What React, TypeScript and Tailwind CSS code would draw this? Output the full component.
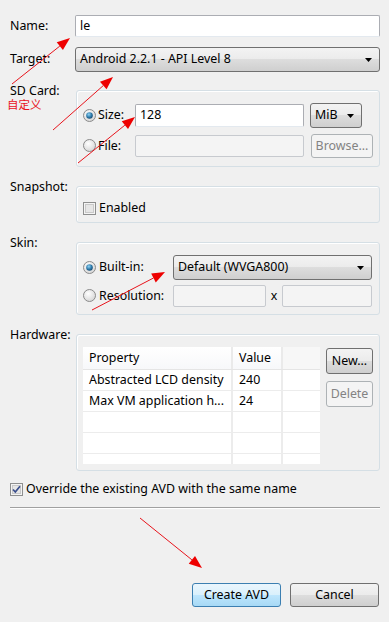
import React from "react";

const font = { fontFamily: '"Noto Sans", "Noto Sans CJK SC", sans-serif' };

const Radio = ({ checked }: { checked?: boolean }) => (
  <svg width="13" height="13" viewBox="0 0 13 13" className="shrink-0">
    <defs>
      <radialGradient id="rb" cx="0.4" cy="0.35" r="0.7">
        <stop offset="0" stopColor="#ffffff" />
        <stop offset="1" stopColor="#d4d4d4" />
      </radialGradient>
      <radialGradient id="rd" cx="0.4" cy="0.35" r="0.7">
        <stop offset="0" stopColor="#8fd3f5" />
        <stop offset="0.6" stopColor="#2c78a8" />
        <stop offset="1" stopColor="#17456a" />
      </radialGradient>
    </defs>
    <circle cx="6.5" cy="6.5" r="6" fill="url(#rb)" stroke="#8b8b8b" />
    {checked && <circle cx="6.5" cy="6.5" r="3.3" fill="url(#rd)" />}
  </svg>
);

const Check = ({ checked }: { checked?: boolean }) => (
  <svg width="13" height="13" viewBox="0 0 13 13" className="shrink-0">
    <rect x="0.5" y="0.5" width="12" height="12" fill="#f4f4f4" stroke="#8e8f8f" />
    <rect x="2.5" y="2.5" width="8" height="8" fill="#e6e6e6" stroke="#c9c9c9" />
    {checked && (
      <path d="M3 6.5 L5.3 9 L10 3.2" fill="none" stroke="#3a4e8c" strokeWidth="1.7" />
    )}
  </svg>
);

const Caret = () => (
  <svg width="7" height="4" viewBox="0 0 7 4" className="shrink-0">
    <path d="M0 0 H7 L3.5 4 Z" fill="#000" />
  </svg>
);

const selectBg =
  "bg-[linear-gradient(#f3f3f3,#ebebeb_50%,#dddddd_50%,#cfcfcf)] border border-[#707070] rounded-[3px]";

const arrows: [number, number, number, number][] = [
  [12, 84, 70, 38],
  [53, 130, 113, 77],
  [78, 163, 135, 117],
  [92, 310, 165, 272],
  [140, 518, 202, 568],
];

const Arrows = () => (
  <svg width="389" height="622" className="absolute inset-0 pointer-events-none">
    {arrows.map(([x1, y1, x2, y2], i) => {
      const dx = x2 - x1;
      const dy = y2 - y1;
      const len = Math.hypot(dx, dy);
      const ux = dx / len;
      const uy = dy / len;
      const bx = x2 - ux * 13;
      const by = y2 - uy * 13;
      const px = -uy * 5;
      const py = ux * 5;
      return (
        <g key={i}>
          <line x1={x1} y1={y1} x2={bx} y2={by} stroke="#e8141c" strokeWidth="1" />
          <polygon
            points={`${x2},${y2} ${bx + px},${by + py} ${bx - px},${by - py}`}
            fill="#ee0000"
          />
        </g>
      );
    })}
  </svg>
);

const Group = ({ className, children }: { className: string; children: React.ReactNode }) => (
  <div
    className={`flex-1 border border-[#d5dfe5] rounded-[3px] shadow-[inset_1px_1px_0_#fff] ${className}`}
  >
    {children}
  </div>
);

const rows = [
  ["Abstracted LCD density", "240"],
  ["Max VM application h...", "24"],
  ["", ""],
  ["", ""],
  ["", ""],
];

export default function App() {
  return (
    <div
      className="relative w-[389px] h-[622px] bg-[#f0f0f0] text-[12.4px] text-black overflow-hidden"
      style={font}
    >
      <div className="pt-[15px] pl-[10px] pr-[9px]">
        {/* Name */}
        <div className="flex items-center h-[22px]">
          <div className="w-[65px]">Name:</div>
          <div className="flex-1 h-[22px] bg-white border border-[#abadb3] border-b-[#e3e9ef] rounded-[2px] flex items-center px-[4px]">
            le
          </div>
        </div>

        {/* Target */}
        <div className="flex items-center h-[25px] mt-[10px]">
          <div className="w-[65px]">Target:</div>
          <div className={`flex-1 h-[25px] flex items-center justify-between pl-[4px] pr-[7px] ${selectBg}`}>
            <span>Android 2.2.1 - API Level 8</span>
            <Caret />
          </div>
        </div>

        {/* SD Card */}
        <div className="flex items-start mt-[18px]">
          <div className="w-[66px] -mt-[6px] leading-[13px]">
            <div className="h-[13px]">SD Card:</div>
            <div className="h-[12px] mt-[2px] -ml-[3px] text-[11.5px] leading-[12px] text-[#e8141c]">自定义</div>
          </div>
          <Group className="pt-[12px] pl-[6px] pb-[8px]">
            <div className="flex items-center h-[25px]">
              <div className="w-[52px] flex items-center gap-[2px]">
                <Radio checked />
                <span>Size:</span>
              </div>
              <div className="w-[169px] h-[23px] bg-white border border-[#abadb3] border-b-[#e3e9ef] rounded-[2px] flex items-center px-[4px]">
                128
              </div>
              <div className={`ml-[6px] w-[52px] h-[25px] flex items-center justify-between pl-[4px] pr-[7px] ${selectBg}`}>
                <span>MiB</span>
                <Caret />
              </div>
            </div>
            <div className="flex items-center h-[24px] mt-[6px]">
              <div className="w-[52px] flex items-center gap-[2px]">
                <Radio />
                <span>File:</span>
              </div>
              <div className="w-[169px] h-[22px] bg-[#f4f4f4] border border-[#c7cacf] rounded-[2px]" />
              <div className="ml-[7px] w-[62px] h-[24px] border border-[#adb2b5] rounded-[3px] bg-[#f4f4f4] text-[#838383] flex items-center justify-center">
                Browse...
              </div>
            </div>
          </Group>
        </div>

        {/* Snapshot */}
        <div className="flex items-start mt-[19px]">
          <div className="w-[66px] -mt-[7px] leading-[15px]">Snapshot:</div>
          <Group className="pt-[14px] pl-[6px] pb-[7px]">
            <div className="flex items-center h-[14px] gap-[3px]">
              <Check />
              <span>Enabled</span>
            </div>
          </Group>
        </div>

        {/* Skin */}
        <div className="flex items-start mt-[19px]">
          <div className="w-[66px] -mt-[7px] leading-[15px]">Skin:</div>
          <Group className="pt-[12px] pl-[6px] pr-[7px] pb-[7px]">
            <div className="flex items-center h-[25px]">
              <div className="w-[90px] flex items-center gap-[3px]">
                <Radio checked />
                <span>Built-in:</span>
              </div>
              <div className={`flex-1 h-[25px] flex items-center justify-between pl-[4px] pr-[7px] ${selectBg}`}>
                <span>Default (WVGA800)</span>
                <Caret />
              </div>
            </div>
            <div className="flex items-center h-[22px] mt-[5px]">
              <div className="w-[90px] flex items-center gap-[3px]">
                <Radio />
                <span>Resolution:</span>
              </div>
              <div className="w-[93px] h-[22px] bg-[#f4f4f4] border border-[#c7cacf] rounded-[2px]" />
              <div className="w-[16px] text-center">x</div>
              <div className="flex-1 h-[22px] bg-[#f4f4f4] border border-[#c7cacf] rounded-[2px]" />
            </div>
          </Group>
        </div>

        {/* Hardware */}
        <div className="flex items-start mt-[19px]">
          <div className="w-[66px] -mt-[7px] leading-[15px]">Hardware:</div>
          <Group className="pt-[12px] pl-[6px] pb-[6px] flex items-start">
            <div className="w-[237px] h-[117px] bg-white overflow-hidden">
              <div className="flex h-[23px] border-b border-[#e5e5e5] bg-[linear-gradient(#ffffff,#f7f8fa)]">
                <div className="w-[150px] pl-[6px] flex items-center border-r-2 border-[#eaeaea]">Property</div>
                <div className="w-[50px] pl-[6px] flex items-center border-r-2 border-[#eaeaea]">Value</div>
                <div className="flex-1 bg-[#f7f7f7]" />
              </div>
              {rows.map(([p, v], i) => (
                <div key={i} className="flex h-[21px] border-b border-[#ececec]">
                  <div className="w-[150px] pl-[6px] flex items-center border-r-2 border-[#ececec] whitespace-nowrap">{p}</div>
                  <div className="w-[50px] pl-[6px] flex items-center border-r-2 border-[#ececec]">{v}</div>
                  <div className="flex-1" />
                </div>
              ))}
            </div>
            <div className="ml-[6px] mt-[1px] flex flex-col gap-[7px]">
              <div className={`w-[47px] h-[26px] flex items-center justify-center ${selectBg}`}>New...</div>
              <div className="w-[47px] h-[26px] flex items-center justify-center border border-[#adb2b5] rounded-[3px] bg-[#f4f4f4] text-[#838383]">
                Delete
              </div>
            </div>
          </Group>
        </div>

        {/* Override */}
        <div className="flex items-center h-[14px] mt-[11px] gap-[3px]">
          <Check checked />
          <span>Override the existing AVD with the same name</span>
        </div>

        <div className="mt-[11px] h-px bg-[#a0a0a0] border-b border-white box-content" />

        <div className="mt-[74px] flex justify-end gap-[9px] pr-[1px]">
          <div className="w-[89px] h-[24px] flex items-center justify-center border border-[#3c7fb1] rounded-[3px] bg-[linear-gradient(#eaf6fd,#d9f0fc_50%,#bee6fd_50%,#a7d9f5)]">
            Create AVD
          </div>
          <div className={`w-[89px] h-[24px] flex items-center justify-center ${selectBg}`}>Cancel</div>
        </div>
      </div>
      <Arrows />
    </div>
  );
}
